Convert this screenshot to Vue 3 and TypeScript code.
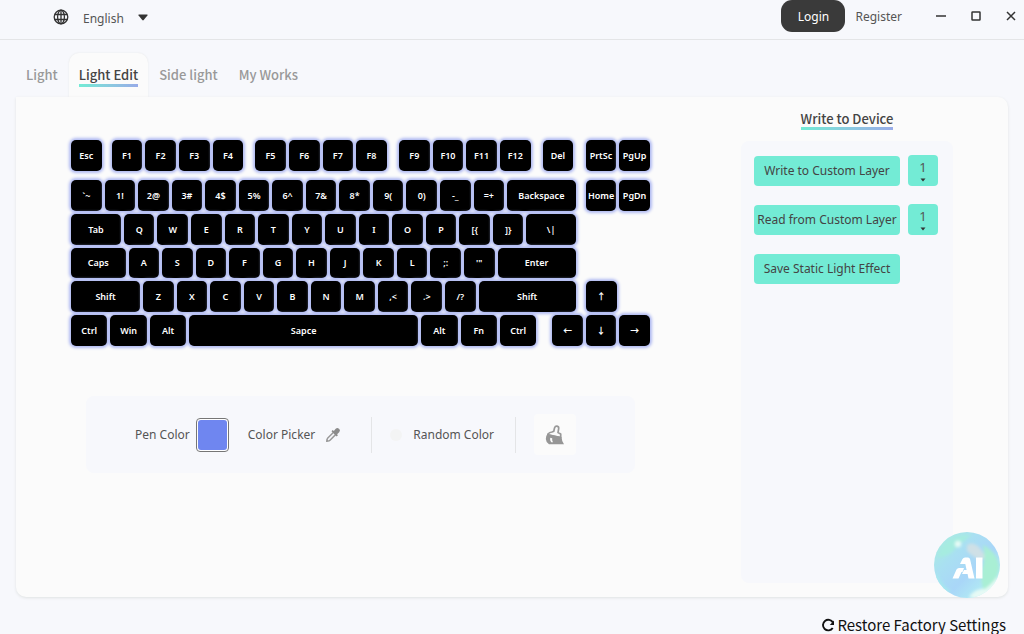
<script setup lang="ts">
import { ref } from 'vue'

interface Key {
  label: string
  size: number
  blank?: boolean
}

const K = 306

const key = (label: string, size: number = K): Key => ({ label, size })
const space = (size: number): Key => ({ label: '', size, blank: true })
const run = (labels: string): Key[] => labels.split(' ').map((l) => key(l))

const topRow: Key[] = [
  key('Esc'), space(40), ...run('F1 F2 F3 F4'), space(60), ...run('F5 F6 F7 F8'), space(62),
  ...run('F9 F10 F11 F12'), space(60), key('Del'), space(64), ...run('PrtSc PgUp'),
]

const mainRows: Key[][] = [
  [...run('`~ 1! 2@ 3# 4$ 5% 6^ 7& 8* 9( 0) -_ =+'), key('Backspace', 686), space(42), ...run('Home PgDn')],
  [key('Tab', 500), ...run('Q W E R T Y U I O P [{ ]}'), key('\\|', 494), space(714)],
  [key('Caps', 546), ...run('A S D F G H J K L ;: \'"'), key('Enter', 784), space(714)],
  [key('Shift', 692), ...run('Z X C V B N M ,< .> /?'), key('Shift', 974), space(42), key('↑'), space(306)],
  [
    key('Ctrl', 364), key('Win', 364), key('Alt', 364), key('Sapce', 2288), key('Alt', 364), key('Fn', 364),
    key('Ctrl', 364), space(98), ...run('← ↓ →'),
  ],
]

const tabs = ['Light', 'Light Edit', 'Side light', 'My Works']
const activeTab = ref('Light Edit')
const language = ref('English')
const penColor = ref('#6f86f0')
const randomColor = ref(false)
const writeLayer = ref('1')
const readLayer = ref('1')
</script>

<template>
  <div class="app">
    <header class="topbar">
      <label class="language">
        <svg class="globe" viewBox="0 0 16 16" aria-hidden="true">
          <g fill="none" stroke="#333" stroke-width="1.3">
            <circle cx="8" cy="8" r="6.8" />
            <ellipse cx="8" cy="8" rx="3.4" ry="6.8" />
            <path d="M8 1v14M1.800 5.500h12.400M1.800 10.500h12.400" />
          </g>
        </svg>
        <select v-model="language" aria-label="Language">
          <option>English</option>
        </select>
        <svg class="caret" viewBox="0 0 10 7" aria-hidden="true"><path d="M1 .5h8q1 0 .4 1L5.700 6q-.7.8-1.400 0L.6 1.500Q0 .5 1 .5z" fill="#333" /></svg>
      </label>
      <div class="account">
        <button class="login" type="button">Login</button>
        <button class="register" type="button">Register</button>
        <div class="window-buttons">
          <button type="button" aria-label="Minimize">
            <svg viewBox="0 0 12 12"><path d="M1 6h10" /></svg>
          </button>
          <button type="button" aria-label="Maximize">
            <svg viewBox="0 0 12 12"><rect x="2" y="2" width="8" height="8" rx="0.500" /></svg>
          </button>
          <button type="button" aria-label="Close">
            <svg viewBox="0 0 12 12"><path d="M2 2l8 8M10 2l-8 8" /></svg>
          </button>
        </div>
      </div>
    </header>

    <nav class="tabs">
      <button
        v-for="tab in tabs"
        :key="tab"
        type="button"
        class="tab"
        :class="{ active: tab === activeTab }"
        @click="activeTab = tab"
      >
        <span>{{ tab }}</span>
      </button>
    </nav>

    <main class="panel">
      <section class="editor">
        <div class="keyboard">
          <div class="row top">
            <template v-for="(k, i) in topRow" :key="i">
              <span v-if="k.blank" class="blank" :style="{ flexGrow: k.size }"></span>
              <button v-else type="button" class="key" :style="{ flexGrow: k.size }">{{ k.label }}</button>
            </template>
          </div>
          <div class="block">
            <div v-for="(row, r) in mainRows" :key="r" class="row">
              <template v-for="(k, i) in row" :key="i">
                <span v-if="k.blank" class="blank" :style="{ flexGrow: k.size }"></span>
                <button v-else type="button" class="key" :style="{ flexGrow: k.size }">{{ k.label }}</button>
              </template>
            </div>
          </div>
        </div>

        <div class="tools">
          <label class="pen">Pen Color <input v-model="penColor" type="color" /></label>
          <button type="button" class="picker">
            Color Picker
            <svg viewBox="0 0 16 16" aria-hidden="true">
              <path d="M8.600 5.200L2.800 11Q2 11.800 2 13L1.700 14.300L3 14Q4.200 14 5 13.200L10.800 7.400" fill="none" stroke="#999" stroke-width="1.500" stroke-linejoin="round" />
              <path d="M6.500 4.300l1.200-1.200 1.100.8 1.900-2.100q1.600-1.500 3.200-.1l.4.400q1.400 1.600-.1 3.200L12.100 7.200l.8 1.100-1.200 1.200z" fill="#8b8b8b" />
            </svg>
          </button>
          <label class="random"><input v-model="randomColor" type="checkbox" />Random Color</label>
          <button type="button" class="brush" aria-label="Clear">
            <svg viewBox="0 0 20 20" aria-hidden="true">
              <path d="M3 9Q4.500 7.200 7 7L8.800 6.200L9.500 3Q10.200 1 12 1.200Q13.900 1.600 13.700 3.500L13 7.600L15.700 9V12.500L3 10z" fill="#fbfbfb" stroke="#999" stroke-width="1.700" stroke-linejoin="round" />
              <path fill-rule="evenodd" d="M2.500 8.800L16.500 12Q16.700 16 19 19.200H4Q1 17.500 .8 14Q.8 11 2.500 8.800zM5.200 12.800Q4.500 15.300 6.200 17.200L8 17.200Q6.800 15 7.200 13.200z" fill="#969696" />
            </svg>
          </button>
        </div>
      </section>

      <aside class="device">
        <h2>Write to Device</h2>
        <div class="actions">
          <div class="action">
            <button type="button">Write to Custom Layer</button>
            <label class="layer">
              <select v-model="writeLayer" aria-label="Layer to write">
                <option>1</option>
                <option>2</option>
                <option>3</option>
              </select>
              <svg viewBox="0 0 6 4" aria-hidden="true"><path d="M.5 .5h5L3 3.500z" /></svg>
            </label>
          </div>
          <div class="action">
            <button type="button">Read from Custom Layer</button>
            <label class="layer">
              <select v-model="readLayer" aria-label="Layer to read">
                <option>1</option>
                <option>2</option>
                <option>3</option>
              </select>
              <svg viewBox="0 0 6 4" aria-hidden="true"><path d="M.5 .5h5L3 3.500z" /></svg>
            </label>
          </div>
          <div class="action">
            <button type="button">Save Static Light Effect</button>
          </div>
        </div>
      </aside>

      <button type="button" class="assistant" aria-label="AI assistant">
        <svg viewBox="0 0 68 68" aria-hidden="true">
          <defs>
            <linearGradient id="orb" x1="0.1" y1="0.1" x2="0.9" y2="0.9">
              <stop offset="0" stop-color="#a9ebe2" />
              <stop offset="0.300" stop-color="#a9dff2" />
              <stop offset="0.600" stop-color="#a9d6f8" />
              <stop offset="0.850" stop-color="#b0e8f4" />
              <stop offset="1" stop-color="#e4f8f8" />
            </linearGradient>
            <clipPath id="orb-clip"><circle cx="34" cy="34" r="33" /></clipPath>
            <filter id="soft" x="-50%" y="-50%" width="200%" height="200%"><feGaussianBlur stdDeviation="1.500" /></filter>
          </defs>
          <circle cx="34" cy="34" r="33" fill="url(#orb)" />
          <g clip-path="url(#orb-clip)">
            <g filter="url(#soft)">
              <path d="M7 18Q18 3 38 4L32 9Q24 14 20 20Q14 26 5 26z" fill="#a6ece0" />
              <path d="M34 14Q40 10 46 16L54 27L46 29Q38 24 34 20z" fill="#cfe0e6" />
              <path d="M50 14Q66 22 66 38Q63 54 51 60Q47 50 49 38Q53 26 50 14z" fill="#a9efd4" />
              <path d="M4 42Q8 54 18 60L12 64L0 48z" fill="#a6e8ee" />
              <path d="M36 66Q42 57 52 58Q60 52 64 46L66 60L50 70z" fill="#e6faf5" />
              <circle cx="25" cy="13" r="3.200" fill="#e6fbf6" />
            </g>
          </g>
          <g fill="#fff">
            <path d="M19.500 47.500L23.500 38.500Q24.300 37 26 37H31L29.500 41H28.500L25.500 47.500z" />
            <path d="M27 33L29.500 28Q30.300 26.500 32 26.500H35Q36.500 26.500 37 28L41.500 47.500H35.500L34.600 43H29L31 39H33.600L32.300 33z" />
            <path d="M43 26.500H49.500V47.500H43z" />
          </g>
        </svg>
      </button>
    </main>

    <footer class="footer">
      <button type="button">
        <svg viewBox="0 0 14 14" aria-hidden="true">
          <path d="M11.700 10A5.300 5.300 0 1 1 11.900 4.500" fill="none" stroke="#111" stroke-width="1.900" />
          <path d="M13 2.500v4.500H8.800z" fill="#111" />
        </svg>
        Restore Factory Settings
      </button>
    </footer>
  </div>
</template>

<style>
body {
  margin: 0;
  background: #f7f8fc;
}
</style>

<style scoped>
.app {
  box-sizing: border-box;
  min-height: 100vh;
  display: flex;
  flex-direction: column;
  overflow: hidden;
  background: #f7f8fc;
  color: #555;
  font: 12px/20px "Noto Sans", "Noto Sans CJK SC", sans-serif;
}

button,
select {
  margin: 0;
  padding: 0;
  border: 0;
  background: none;
  color: inherit;
  font: inherit;
  cursor: pointer;
}

select {
  appearance: none;
}

svg {
  display: block;
}

.topbar {
  flex: none;
  height: 39px;
  display: flex;
  justify-content: space-between;
  border-bottom: 1px solid #e4e5e7;
}

.language {
  display: flex;
  align-items: center;
  height: 34px;
  padding-left: 53px;
}

.language select {
  padding-top: 3px;
}

.globe {
  width: 16px;
  height: 16px;
  margin-right: 14px;
}

.caret {
  width: 10px;
  height: 7px;
  margin-left: 14px;
}

.account {
  display: flex;
  align-items: flex-start;
}

.login {
  width: 64px;
  height: 32px;
  padding-top: 1px;
  border-radius: 11px;
  background: #3a3a3a;
  color: #fff;
}

.register {
  height: 33px;
  margin-left: 10px;
}

.window-buttons {
  display: flex;
  gap: 23px;
  margin: 10px 7px 0 33px;
}

.window-buttons svg {
  width: 12px;
  height: 12px;
  fill: none;
  stroke: #333;
  stroke-width: 1.5;
}

.tabs {
  flex: none;
  display: flex;
  gap: 1px;
  height: 44px;
  margin-top: 13px;
  padding-left: 16px;
  font: 500 13px/20px "Noto Sans CJK SC", sans-serif;
  color: #999;
}

.tab {
  display: flex;
  justify-content: center;
  padding: 12px 10px 0;
}

.tab span {
  height: 22px;
}

.tab.active {
  border-radius: 10px 10px 0 0;
  background: #fbfbfb;
  box-shadow: 0 0 2px #e4e6e6;
  color: #444;
}

.tab.active span,
.device h2 {
  background: linear-gradient(90deg, #73ebd5, #8bc8e0 55%, #98abe8) bottom / 100% 3px no-repeat;
}

.panel {
  position: relative;
  flex: none;
  box-sizing: border-box;
  min-height: 500px;
  display: flex;
  margin: 0 16px;
  border-radius: 0 10px 10px 10px;
  background: #fbfbfb;
  box-shadow: 0 1px 3px #dfe2e2;
}

.editor {
  flex: 1;
  padding: 43px 91px 0 55px;
}

.keyboard {
  font-size: 9px;
  font-weight: 600;
  line-height: 12px;
}

.row {
  display: flex;
  gap: 3px;
}

.top {
  height: 31px;
  margin-bottom: 9px;
}

.block {
  height: 166px;
  display: grid;
  grid-auto-rows: 1fr;
  gap: 3px;
}

.key,
.blank {
  flex: 1 1 0;
  min-width: 0;
}

.key {
  padding-top: 1px;
  border-radius: 5px;
  background: #000;
  box-shadow: 0 0 3px 2px #b0baf2;
  color: #fff;
  white-space: nowrap;
}

.tools {
  display: flex;
  align-items: center;
  height: 77px;
  margin: 50px 15px 0;
  border-radius: 8px;
  background: #f7f8fc;
}

.pen {
  display: flex;
  align-items: center;
  gap: 6px;
  margin-left: 49px;
}

.pen input {
  box-sizing: border-box;
  width: 33px;
  height: 34px;
  padding: 0;
  border: 1px solid #767676;
  border-radius: 4px;
  background: #fff;
}

.pen input::-webkit-color-swatch-wrapper {
  padding: 1px;
}

.pen input::-webkit-color-swatch {
  border: 0;
  border-radius: 3px;
}

.picker {
  display: flex;
  align-items: center;
  gap: 10px;
  margin-left: 19px;
}

.picker svg {
  width: 16px;
  height: 16px;
}

.random {
  display: flex;
  align-items: center;
  gap: 11px;
  height: 36px;
  margin-left: 30px;
  padding: 0 21px 0 18px;
  border: solid #e4e5e7;
  border-width: 0 1px;
}

.random input {
  appearance: none;
  width: 12px;
  height: 12px;
  margin: 0;
  border-radius: 50%;
  background: #f3f4f4;
}

.random input:checked {
  background: #73ebd5;
}

.brush {
  display: grid;
  place-items: center;
  width: 42px;
  height: 41px;
  margin-left: 18px;
  border-radius: 4px;
  background: #fbfbfb;
}

.brush svg {
  width: 20px;
  height: 20px;
}

.device {
  flex: none;
  width: 212px;
  display: flex;
  flex-direction: column;
  align-items: center;
  margin: 10px 55px 14px 0;
}

.device h2 {
  height: 23px;
  margin: 0 0 11px;
  color: #444;
  font: 500 13px/23px "Noto Sans CJK SC", sans-serif;
}

.actions {
  flex: 1;
  box-sizing: border-box;
  align-self: stretch;
  display: flex;
  flex-direction: column;
  gap: 18px;
  padding: 14px 14px 0 13px;
  border-radius: 8px;
  background: #f7f8fc;
}

.action {
  display: flex;
  align-items: center;
  gap: 8px;
  height: 31px;
}

.action button {
  width: 146px;
  height: 30px;
  border-radius: 4px;
  background: #73ebd5;
  color: #444;
  white-space: nowrap;
}

.layer {
  position: relative;
  width: 30px;
  height: 31px;
}

.layer select {
  width: 100%;
  height: 100%;
  padding-bottom: 7px;
  border-radius: 4px;
  background: #73ebd5;
  color: #555;
  font-size: 13px;
  text-align: center;
}

.layer svg {
  position: absolute;
  left: 12px;
  bottom: 4px;
  width: 6px;
  height: 4px;
  fill: #333;
  pointer-events: none;
}

.assistant {
  position: absolute;
  right: 7px;
  bottom: -2px;
  border-radius: 50%;
}

.assistant svg {
  width: 68px;
  height: 68px;
}

.footer {
  display: flex;
  justify-content: flex-end;
  height: 37px;
  overflow: hidden;
}

.footer button {
  display: flex;
  align-items: center;
  gap: 2px;
  height: 24px;
  margin: 16px 18px 0 0;
  color: #111;
  font: 400 15px/24px "Noto Sans CJK SC", sans-serif;
}

.footer svg {
  width: 14px;
  height: 14px;
}
</style>
